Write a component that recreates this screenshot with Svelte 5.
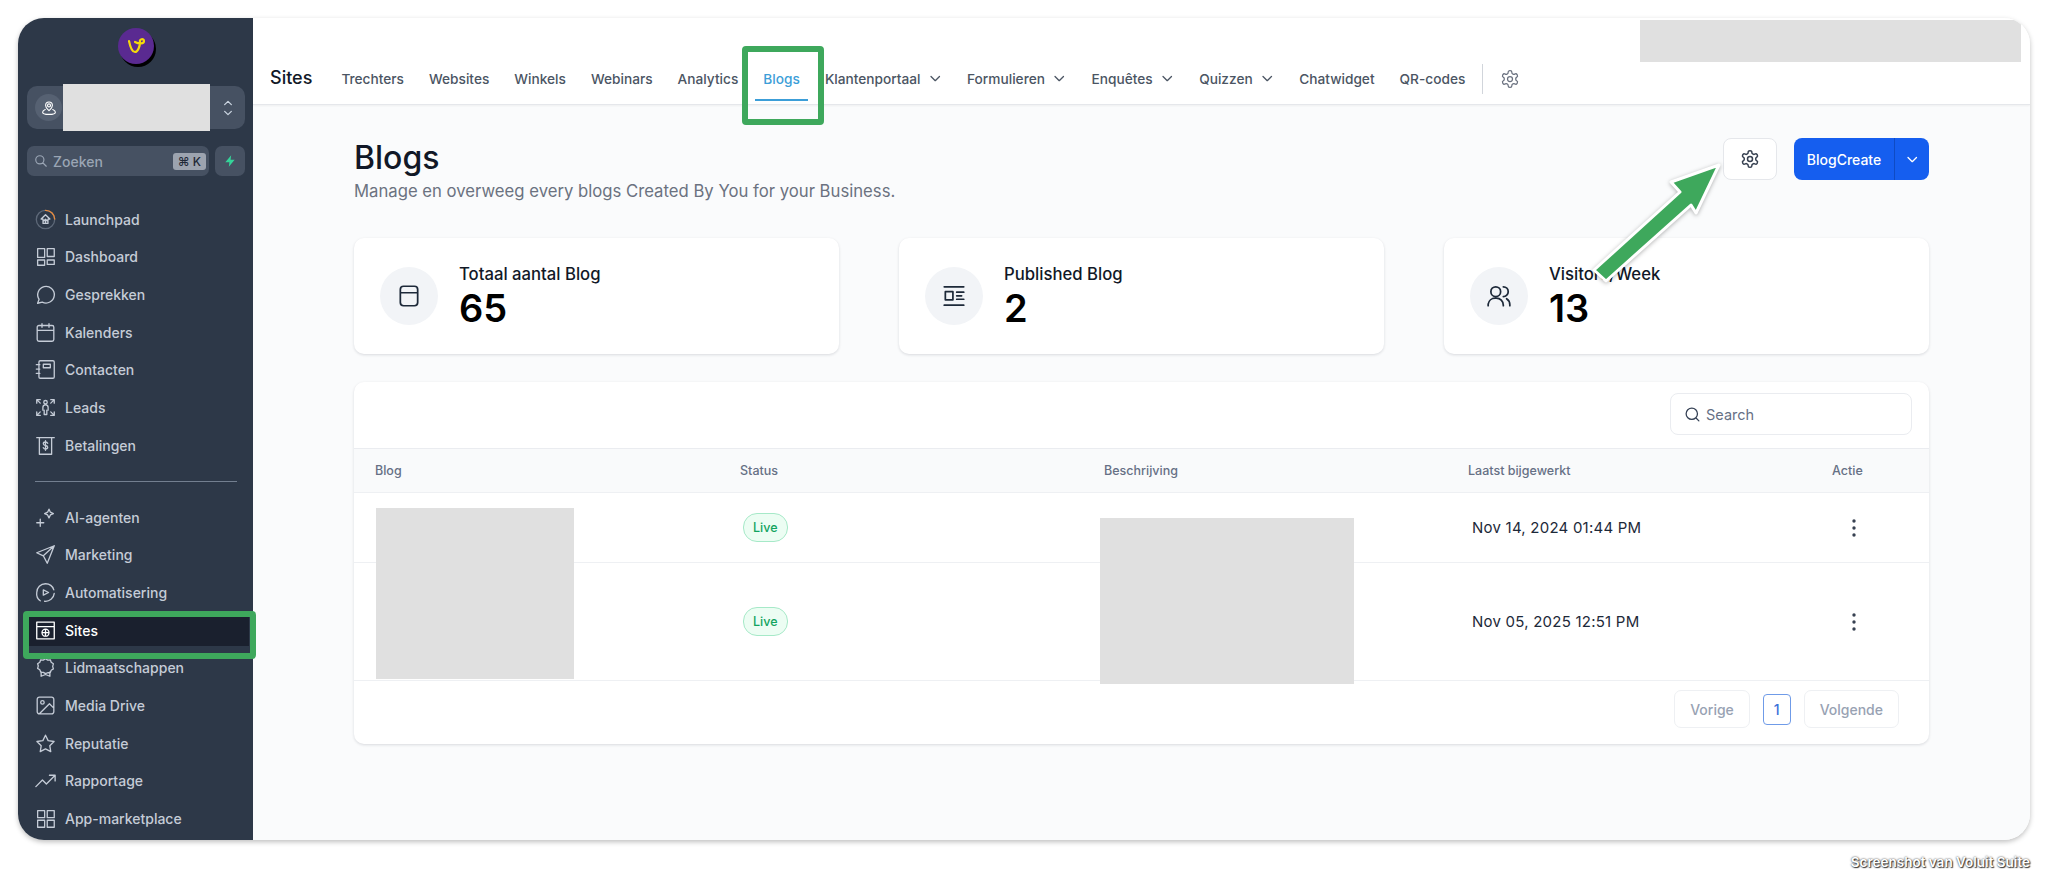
<script lang="ts">
  const gear = "M12.22 2h-.44a2 2 0 0 0-2 2v.18a2 2 0 0 1-1 1.73l-.43.25a2 2 0 0 1-2 0l-.15-.08a2 2 0 0 0-2.73.73l-.22.38a2 2 0 0 0 .73 2.73l.15.1a2 2 0 0 1 1 1.72v.51a2 2 0 0 1-1 1.74l-.15.09a2 2 0 0 0-.73 2.73l.22.38a2 2 0 0 0 2.73.73l.15-.08a2 2 0 0 1 2 0l.43.25a2 2 0 0 1 1 1.73V20a2 2 0 0 0 2 2h.44a2 2 0 0 0 2-2v-.18a2 2 0 0 1 1-1.73l.43-.25a2 2 0 0 1 2 0l.15.08a2 2 0 0 0 2.73-.73l.22-.39a2 2 0 0 0-.73-2.73l-.15-.08a2 2 0 0 1-1-1.74v-.5a2 2 0 0 1 1-1.74l.15-.09a2 2 0 0 0 .73-2.73l-.22-.38a2 2 0 0 0-2.73-.73l-.15.08a2 2 0 0 1-2 0l-.43-.25a2 2 0 0 1-1-1.73V4a2 2 0 0 0-2-2z M15 12a3 3 0 1 1-6 0 3 3 0 1 1 6 0z";

  const upper = [
    { label: "Launchpad", launch: true, d: "M12 6.500 7 11.500h2.200v5h5.600v-5H17z M12 16.500v-4.500 M10.200 13.500 12 11.700l1.800 1.800" },
    { label: "Dashboard", d: "M3 3h8v10H3z M14 3h8v9h-8z M3 16h8v6H3z M14 16h8v5h-8z" },
    { label: "Gesprekken", d: "M3 22l1.700-4.500a9.500 9.500 0 1 1 3.600 3.200z" },
    { label: "Kalenders", d: "M8 2v4M16 2v4M2.500 9.500h19M4.500 4h15a2 2 0 0 1 2 2v14a2 2 0 0 1-2 2h-15a2 2 0 0 1-2-2V6a2 2 0 0 1 2-2z" },
    { label: "Contacten", d: "M1.500 6.500h4M1.500 11.500h4M1.500 16.500h4M6 2h14.500a1.500 1.500 0 0 1 1.500 1.500v17a1.500 1.500 0 0 1-1.500 1.500H6a1.500 1.500 0 0 1-1.500-1.500v-17A1.500 1.500 0 0 1 6 2z M9.500 6h8v4h-8z" },
    { label: "Leads", d: "M14 6a2 2 0 1 1-4 0 2 2 0 1 1 4 0z M9 15v-3a3 3 0 0 1 6 0v3 M10.500 15v5h3v-5 M2 3h4M2 3v4M2 3l4 4 M22 3h-4M22 3v4M22 3l-4 4 M2 21h4M2 21v-4M2 21l4-4 M22 21h-4M22 21v-4M22 21l-4-4" },
    { label: "Betalingen", d: "M2 3h20 M5 3v19h14V3 M14.500 9.500c-.5-1-1.500-1.500-2.500-1.500-1.400 0-2.500.7-2.500 2s1.100 1.800 2.500 2 2.500.7 2.500 2-1.100 2-2.500 2c-1 0-2-.5-2.500-1.500 M12 6.500v11" }
  ];
  const lower = [
    { label: "AI-agenten", d: "M16 2.500l1.600 3.400L21 7.500l-3.400 1.600L16 12.500l-1.600-3.400L11 7.500l3.400-1.600z M6 14v8 M2 18h8" },
    { label: "Marketing", d: "M22 2 2 10l7.500 3.500L14 22z M22 2 9.500 13.500" },
    { label: "Automatisering", d: "M6 21.500A10 10 0 0 1 2 12 10 10 0 0 1 12 2a10 10 0 0 1 9.500 7 M22 13a10 10 0 0 1-11 9 M9.500 9l6 3-6 3z" },
    { label: "Sites", d: "M2 2.500h20v19H2z M2 7.500h20 M16 14.500a4 4 0 1 1-8 0 4 4 0 1 1 8 0z M8 14.500h8 M12 10.500v8", active: true },
    { label: "Lidmaatschappen", d: "M12 2l2.500 1.500 3-.3 1 2.800 2.500 1.800-.8 2.900.8 2.900-2.500 1.500-1 2.600-3 .3L12 19l-2.500-1.500-3-.3-1-2.600L3 13l.8-2.800L3 7.800l2.500-1.800 1-2.800 3 .3z M7 17v5l5-2 5 2v-5" },
    { label: "Media Drive", d: "M5 2.500h14a2.500 2.500 0 0 1 2.500 2.500v14a2.500 2.500 0 0 1-2.500 2.500H5A2.500 2.500 0 0 1 2.500 19V5A2.500 2.500 0 0 1 5 2.500z M10.500 8.500a2 2 0 1 1-4 0 2 2 0 1 1 4 0z M21.500 15l-5-5L5 21.500" },
    { label: "Reputatie", d: "M12 2.500l3 6.200 6.800 1-4.900 4.800 1.100 6.800-6-3.200-6 3.200 1.100-6.800-4.900-4.800 6.800-1z" },
    { label: "Rapportage", d: "M1 19l7.500-7.500 4.500 4.500 10-10 M16.500 6H23v6.500" },
    { label: "App-marketplace", d: "M3 3h8v8H3z M14 3h8v8h-8z M3 14h8v8H3z M14 14h8v8h-8z" }
  ];

  const tabs = [
    { label: "Trechters" }, { label: "Websites" }, { label: "Winkels" }, { label: "Webinars" },
    { label: "Analytics" }, { label: "Blogs", active: true }, { label: "Klantenportaal", menu: true },
    { label: "Formulieren", menu: true }, { label: "Enquêtes", menu: true }, { label: "Quizzen", menu: true },
    { label: "Chatwidget" }, { label: "QR-codes" }
  ];

  const stats = [
    { label: "Totaal aantal Blog", value: "65", d: "M7 3h10a3 3 0 0 1 3 3v12a3 3 0 0 1-3 3H7a3 3 0 0 1-3-3V6a3 3 0 0 1 3-3z M4 9h16" },
    { label: "Published Blog", value: "2", d: "M3 3.500h18 M3 20.500h18 M4 8h7v7.500H4z M14.500 8.500H21 M14.500 15H21 M14.500 11.800H19" },
    { label: "Visitors/Week", value: "13", d: "M13.500 8a4.500 4.500 0 1 1-9 0 4.500 4.500 0 1 1 9 0z M2 21v-1.500A6.500 6.500 0 0 1 8.500 14h1a6.500 6.500 0 0 1 6.500 6.500v.5 M16 3.500a4.500 4.500 0 0 1 0 9 M19 14.500a6.500 6.500 0 0 1 3 5.500v1" }
  ];

  const rows = [
    { date: "Nov 14, 2024 01:44 PM", height: "row-short" },
    { date: "Nov 05, 2025 12:51 PM", height: "row-tall" }
  ];
  const columns = ["Blog", "Status", "Beschrijving", "Laatst bijgewerkt", "Actie"];
</script>

{#snippet icon(d, cls = "ico")}
  <svg class={cls} viewBox="0 0 24 24" fill="none" stroke="currentColor" stroke-linecap="round" stroke-linejoin="round"><path {d} /></svg>
{/snippet}

{#snippet chevron()}
  <svg class="chev" viewBox="0 0 24 24" fill="none" stroke="currentColor" stroke-width="2.200" stroke-linecap="round" stroke-linejoin="round"><path d="m5 9 7 7 7-7" /></svg>
{/snippet}

{#snippet navItem(item)}
  <a class="nav-item" class:active={item.active} href="#/">
    {#if item.launch}
      <svg class="ico" viewBox="0 0 24 24" fill="none" stroke="currentColor" stroke-linecap="round" stroke-linejoin="round">
        <circle cx="12" cy="12" r="10.500" stroke="#5d6878" />
        <path d="M12 1.500a10.500 10.500 0 0 1 10.500 10" stroke="#e98a3c" />
        <path d={item.d} />
      </svg>
    {:else}
      {@render icon(item.d)}
    {/if}
    <span>{item.label}</span>
  </a>
{/snippet}

<div class="page">
  <div class="window">
    <aside class="sidebar">
      <div class="logo">
        <svg viewBox="0 0 36 36" fill="none"><path d="M11 13c1 5 3 11 6 11 3 0 5-6 5-10-1-3 4-4 4-1 0 3-5 3-9 1" stroke="#f5d90a" stroke-width="2.200" stroke-linecap="round" stroke-linejoin="round" /></svg>
      </div>

      <div class="location">
        <span class="pin">
          <svg viewBox="0 0 24 24" fill="none" stroke="currentColor" stroke-width="1.500" stroke-linecap="round" stroke-linejoin="round"><path d="M12 15.500c-2-2-4.500-4-4.500-7a4.500 4.500 0 0 1 9 0c0 3-2.500 5-4.500 7z M14 8.500a2 2 0 1 1-4 0 2 2 0 1 1 4 0z M7 14c-2 .8-3.500 2-3.500 3.500 0 2 3.500 3 8.500 3s8.500-1 8.500-3c0-1.500-1.500-2.700-3.500-3.500" /></svg>
        </span>
        <span class="redact loc-redact"></span>
        <svg class="updown" viewBox="0 0 12 24" fill="none" stroke="currentColor" stroke-width="1.500" stroke-linecap="round" stroke-linejoin="round"><path d="m2 8 4-4 4 4 M2 16l4 4 4-4" /></svg>
      </div>

      <div class="search-row">
        <div class="side-search">
          <svg viewBox="0 0 24 24" fill="none" stroke="currentColor" stroke-width="2" stroke-linecap="round"><path d="M17 10a7 7 0 1 1-14 0 7 7 0 1 1 14 0z M15 15l6 6" /></svg>
          <span class="zoeken">Zoeken</span>
          <kbd>⌘ K</kbd>
        </div>
        <button class="bolt" aria-label="Snel">
          <svg viewBox="0 0 24 24"><path d="M14 2 4 14h7l-1 8 10-12h-7z" fill="#34d399" /></svg>
        </button>
      </div>

      <nav class="menu">
        {#each upper as item}{@render navItem(item)}{/each}
      </nav>
      <hr class="divider" />
      <nav class="menu">
        {#each lower as item}{@render navItem(item)}{/each}
      </nav>
    </aside>

    <div class="main">
      <header class="topbar">
        <span class="redact top-redact"></span>
        <span class="section">Sites</span>
        <div class="tabs">
          {#each tabs as tab}
            <a class="tab" class:active={tab.active} href="#/">
              {tab.label}
              {#if tab.menu}{@render chevron()}{/if}
            </a>
          {/each}
        </div>
        <span class="sep"></span>
        {@render icon(gear, "ico top-gear")}
      </header>

      <main class="content">
        <div class="head">
          <div>
            <h1>Blogs</h1>
            <p>Manage en overweeg every blogs Created By You for your Business.</p>
          </div>
          <div class="actions">
            <button class="gear-btn" aria-label="Instellingen">{@render icon(gear, "ico btn-gear")}</button>
            <div class="create">
              <button class="create-main">BlogCreate</button>
              <button class="create-more" aria-label="Meer">{@render chevron()}</button>
            </div>
          </div>
        </div>

        <div class="stats">
          {#each stats as stat}
            <div class="card">
              <span class="circle">{@render icon(stat.d, "ico card-ico")}</span>
              <div>
                <div class="stat-label">{stat.label}</div>
                <div class="stat-value">{stat.value}</div>
              </div>
            </div>
          {/each}
        </div>

        <section class="table">
          <span class="redact tbl-redact-a"></span>
          <span class="redact tbl-redact-b"></span>
          <div class="table-top">
            <div class="tsearch">
              <svg viewBox="0 0 24 24" fill="none" stroke="currentColor" stroke-width="1.800" stroke-linecap="round"><path d="M19 11a8 8 0 1 1-16 0 8 8 0 1 1 16 0z M17 17l4 4" /></svg>
              <span>Search</span>
            </div>
          </div>
          <div class="grid thead">
            {#each columns as c}<div>{c}</div>{/each}
          </div>
          {#each rows as row}
            <div class="grid trow {row.height}">
              <div></div>
              <div><span class="live">Live</span></div>
              <div></div>
              <div class="date">{row.date}</div>
              <div class="dots">
                <svg viewBox="0 0 4 20" fill="#374151"><circle cx="2" cy="3" r="1.700" /><circle cx="2" cy="10" r="1.700" /><circle cx="2" cy="17" r="1.700" /></svg>
              </div>
            </div>
          {/each}
          <div class="pager">
            <span class="pg">Vorige</span>
            <span class="pg current">1</span>
            <span class="pg">Volgende</span>
          </div>
        </section>
      </main>
    </div>
  </div>

  <div class="caption">Screenshot van Voluit Suite</div>

  <!-- annotation layer drawn over the screenshot -->
  <svg class="annot" viewBox="0 0 2048 888">
    <rect x="26" y="614" width="227" height="42" rx="1" fill="none" stroke="#3ea85c" stroke-width="6" />
    <rect x="745" y="49" width="76" height="73" rx="1" fill="none" stroke="#3ea85c" stroke-width="6" />
    <polygon points="1719,165 1671,182 1680,192 1594,270 1606,281 1691,205 1696,213" fill="#3ea85c" stroke="#fff" stroke-width="3" stroke-linejoin="round" class="arrow" />
  </svg>
</div>

<style>
  :global(html), :global(body) {
    margin: 0;
    background: #fff;
    overflow: hidden;
  }
  .page {
    position: relative;
    width: 2048px;
    height: 888px;
    padding: 18px 18px 0;
    box-sizing: border-box;
    font-family: Inter, "Liberation Sans", sans-serif;
    color: #111827;
  }
  .window {
    display: flex;
    width: 2012px;
    height: 822px;
    border-radius: 26px;
    overflow: hidden;
    box-shadow: 0 2px 5px rgba(0, 0, 0, 0.25);
  }
  .sidebar {
    width: 235px;
    flex: none;
    background: #2d3848;
    box-sizing: border-box;
    padding: 10px 8px 0 9px;
    color: #c5ccd7;
    font-size: 14px;
    font-weight: 500;
  }
  .logo {
    width: 36px;
    height: 36px;
    margin: 0 auto;
    border-radius: 50%;
    background: #5a2a91;
    box-shadow: 2px 3px 0 #000;
  }
  .logo svg {
    display: block;
  }
  .location {
    position: relative;
    display: flex;
    align-items: center;
    justify-content: space-between;
    height: 43px;
    margin-top: 22px;
    padding: 0 12px 0 8px;
    background: #465162;
    border-radius: 10px;
  }
  .pin {
    display: flex;
    align-items: center;
    justify-content: center;
    width: 27px;
    height: 27px;
    border-radius: 50%;
    background: #566172;
    color: #fff;
  }
  .pin svg {
    width: 18px;
    height: 18px;
  }
  .updown {
    width: 10px;
    height: 20px;
    color: #cbd5e1;
  }
  .redact {
    position: absolute;
    background: #e0e0e0;
  }
  .loc-redact {
    left: 36px;
    top: -2px;
    width: 147px;
    height: 47px;
  }
  .search-row {
    display: flex;
    gap: 6px;
    margin-top: 17px;
  }
  .side-search {
    display: flex;
    align-items: center;
    flex: 1;
    height: 30px;
    padding: 0 3px 0 7px;
    background: #465162;
    border-radius: 7px;
    color: #9aa5b4;
  }
  .side-search svg {
    width: 14px;
    height: 14px;
    margin-right: 5px;
  }
  .zoeken {
    flex: 1;
  }
  kbd {
    padding: 1px 5px;
    background: #9ca3af;
    border-radius: 3px;
    color: #1f2937;
    font: 500 12px Inter, sans-serif;
  }
  .bolt {
    display: flex;
    align-items: center;
    justify-content: center;
    width: 30px;
    height: 30px;
    padding: 0;
    border: 0;
    border-radius: 7px;
    background: #465162;
  }
  .bolt svg {
    width: 14px;
    height: 14px;
  }
  .menu {
    display: flex;
    flex-direction: column;
    gap: 5.700px;
  }
  .search-row + .menu {
    margin-top: 27px;
  }
  .nav-item {
    display: flex;
    align-items: center;
    gap: 9px;
    height: 32px;
    margin: 0 -4px 0 2px;
    padding-left: 6px;
    color: inherit;
    text-decoration: none;
  }
  .nav-item.active {
    background: #1a202e;
    color: #fff;
  }
  .ico {
    width: 21px;
    height: 21px;
    flex: none;
    stroke-width: 1.500;
  }
  .divider {
    height: 1px;
    margin: 19.500px 8px 19.500px 8px;
    border: 0;
    background: #737f90;
  }
  .main {
    position: relative;
    flex: 1;
    display: flex;
    flex-direction: column;
    min-width: 0;
    background: #fafbfc;
  }
  .topbar {
    position: relative;
    display: flex;
    align-items: center;
    height: 87px;
    box-sizing: border-box;
    padding: 33px 0 0 17px;
    background: #fff;
    border-bottom: 1px solid #e5e7eb;
    box-shadow: 0 1px 2px rgba(0, 0, 0, 0.05);
  }
  .top-redact {
    right: 9px;
    top: 2px;
    width: 381px;
    height: 42px;
  }
  .section {
    margin-right: 29px;
    font-size: 18px;
    font-weight: 500;
  }
  .tabs {
    display: flex;
    gap: 25px;
    align-items: center;
    margin-top: 2px;
  }
  .tab {
    position: relative;
    display: flex;
    align-items: center;
    gap: 7px;
    color: #4b5563;
    font-size: 13.700px;
    font-weight: 500;
    text-decoration: none;
  }
  .tab.active {
    color: #3c9ed8;
  }
  .tab.active::after {
    content: "";
    position: absolute;
    left: -8px;
    right: -8px;
    bottom: -14px;
    height: 2px;
    background: #3c9ed8;
  }
  .chev {
    width: 14.500px;
    height: 14.500px;
  }
  .sep {
    width: 1px;
    height: 30px;
    margin: 2px 17px 0;
    background: #d1d5db;
  }
  .top-gear {
    width: 20px;
    height: 20px;
    margin-top: 2px;
    color: #6b7280;
  }
  .content {
    padding: 33px 101px 0 101px;
  }
  .head {
    display: flex;
    justify-content: space-between;
    align-items: flex-start;
  }
  h1 {
    margin: 0;
    font-size: 32px;
    font-weight: 500;
    line-height: 40px;
  }
  .head p {
    margin: 0.500px 0 0;
    color: #6b7280;
    font-size: 16.700px;
    line-height: 24px;
  }
  .actions {
    display: flex;
    gap: 17px;
  }
  .gear-btn {
    display: flex;
    align-items: center;
    justify-content: center;
    width: 54px;
    height: 42px;
    padding: 0;
    background: #fff;
    border: 1px solid #e5e7eb;
    border-radius: 8px;
    color: #374151;
  }
  .btn-gear {
    width: 20px;
    height: 20px;
    stroke-width: 1.800;
  }
  .create {
    display: flex;
    height: 42px;
    border-radius: 8px;
    overflow: hidden;
    background: #155eef;
    color: #fff;
  }
  .create button {
    padding: 0;
    border: 0;
    background: none;
    color: inherit;
    font: 500 14px Inter, sans-serif;
  }
  .create-main {
    width: 101px;
    border-right: 1px solid #0f4bc4 !important;
  }
  .create-more {
    display: flex;
    align-items: center;
    justify-content: center;
    width: 34px;
  }
  .stats {
    display: grid;
    grid-template-columns: repeat(3, 1fr);
    gap: 60px;
    margin-top: 35.500px;
  }
  .card {
    display: flex;
    align-items: center;
    gap: 21px;
    height: 116px;
    padding-left: 26px;
    background: #fff;
    border-radius: 10px;
    box-shadow: 0 1px 3px rgba(16, 24, 40, 0.14);
  }
  .circle {
    display: flex;
    align-items: center;
    justify-content: center;
    width: 58px;
    height: 58px;
    border-radius: 50%;
    background: #f2f4f7;
    color: #1d2939;
  }
  .card-ico {
    width: 26px;
    height: 26px;
    stroke-width: 1.600;
  }
  .stat-label {
    font-size: 16.700px;
    font-weight: 500;
    line-height: 22px;
  }
  .stat-value {
    margin-top: 2px;
    color: #000;
    font-size: 38px;
    font-weight: 600;
    line-height: 42px;
  }
  .table {
    position: relative;
    margin-top: 28px;
    background: #fff;
    border-radius: 10px;
    box-shadow: 0 1px 3px rgba(16, 24, 40, 0.14);
  }
  .tbl-redact-a {
    left: 22px;
    top: 126px;
    width: 198px;
    height: 171px;
    z-index: 1;
  }
  .tbl-redact-b {
    left: 746px;
    top: 136px;
    width: 254px;
    height: 166px;
    z-index: 1;
  }
  .table-top {
    display: flex;
    justify-content: flex-end;
    height: 67px;
    box-sizing: border-box;
    padding: 11px 17px 0 0;
    border-bottom: 1px solid #eaecf0;
  }
  .tsearch {
    display: flex;
    align-items: center;
    gap: 5px;
    width: 242px;
    height: 42px;
    box-sizing: border-box;
    padding-left: 13px;
    border: 1px solid #eaecf0;
    border-radius: 8px;
    color: #667085;
    font-size: 14.500px;
  }
  .tsearch svg {
    width: 17px;
    height: 17px;
    color: #344054;
  }
  .grid {
    display: grid;
    grid-template-columns: 364px 364px 364px 364px 118px;
    align-items: center;
    border-bottom: 1px solid #eef0f3;
  }
  .grid > div {
    padding-left: 22px;
  }
  .grid > div:first-child {
    padding-left: 21px;
  }
  .thead {
    height: 43px;
    background: #f9fafb;
    color: #667085;
    font-size: 12.500px;
    font-weight: 500;
  }
  .row-short {
    height: 69px;
  }
  .row-tall {
    height: 117px;
  }
  .live {
    display: inline-block;
    margin-left: 3px;
    padding: 0 9px;
    height: 27px;
    line-height: 27px;
    background: #ecfdf3;
    border: 1px solid #a6e9c8;
    border-radius: 14px;
    color: #12a45f;
    font-size: 12.500px;
    font-weight: 500;
  }
  .grid > .date {
    padding-left: 26px;
    color: #1d2939;
    font-size: 15px;
    letter-spacing: 0.230px;
  }
  .grid > .dots {
    padding-left: 42px;
  }
  .dots svg {
    display: block;
    width: 4px;
    height: 20px;
  }
  .pager {
    display: flex;
    justify-content: flex-end;
    align-items: center;
    gap: 13px;
    height: 56px;
    padding: 0 30px 7px 0;
  }
  .pg {
    display: flex;
    align-items: center;
    padding: 0 15px;
    height: 36px;
    border: 1px solid #eef0f3;
    border-radius: 7px;
    color: #98a2b3;
    font-size: 14px;
    font-weight: 500;
  }
  .pg.current {
    padding: 0 10px;
    height: 29px;
    border-color: #6f9be8;
    border-radius: 4px;
    color: #3b70d9;
  }
  .caption {
    margin-top: 14px;
    text-align: right;
    color: #fff;
    font-size: 13.500px;
    font-weight: 600;
    text-shadow: 0 0 2px #222, 1px 1px 1px #444;
  }
  .annot {
    position: absolute;
    left: 0;
    top: 0;
    width: 2048px;
    height: 888px;
    pointer-events: none;
  }
  .arrow {
    filter: drop-shadow(0 1px 2px rgba(0, 0, 0, 0.3));
  }
</style>
